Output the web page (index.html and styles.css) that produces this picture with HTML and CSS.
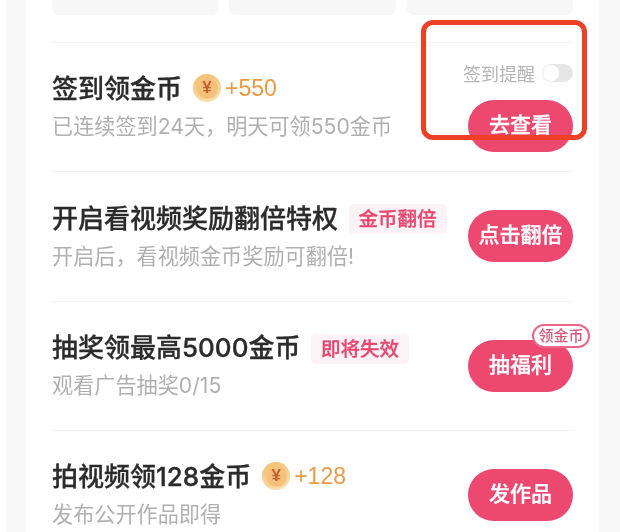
FILE: index.html
```html
<!DOCTYPE html>
<html lang="zh-CN">

<head>
	<meta charset="utf-8">
	<title>金币任务</title>
	<link rel="stylesheet" href="styles.css">
</head>

<body>
	<div class="panel">
		<div class="card">
			<div class="top-tiles">
				<div class="tile"></div>
				<div class="tile"></div>
				<div class="tile"></div>
			</div>

			<div class="task task-first">
				<div class="task-text">
					<div class="task-title">
						<span>签到领金币</span>
						<span class="coin"><span class="coin-inner">¥</span></span>
						<span class="coin-num">+550</span>
					</div>
					<div class="task-sub">已连续签到24天，明天可领550金币</div>
				</div>
				<div class="task-side">
					<div class="remind">
						<span>签到提醒</span>
						<span class="switch"><span class="knob"></span></span>
					</div>
					<div class="btn">去查看</div>
				</div>
			</div>

			<div class="task">
				<div class="task-text">
					<div class="task-title">
						<span>开启看视频奖励翻倍特权</span>
						<span class="tag">金币翻倍</span>
					</div>
					<div class="task-sub">开启后，看视频金币奖励可翻倍!</div>
				</div>
				<div class="task-side">
					<div class="btn">点击翻倍</div>
				</div>
			</div>

			<div class="task">
				<div class="task-text">
					<div class="task-title">
						<span>抽奖领最高5000金币</span>
						<span class="tag">即将失效</span>
					</div>
					<div class="task-sub">观看广告抽奖0/15</div>
				</div>
				<div class="task-side">
					<div class="btn">抽福利<span class="badge">领金币</span></div>
				</div>
			</div>

			<div class="task task-last">
				<div class="task-text">
					<div class="task-title">
						<span>拍视频领128金币</span>
						<span class="coin"><span class="coin-inner">¥</span></span>
						<span class="coin-num">+128</span>
					</div>
					<div class="task-sub">发布公开作品即得</div>
				</div>
				<div class="task-side">
					<div class="btn">发作品</div>
				</div>
			</div>
		</div>
	</div>

	<!-- red annotation box drawn over the screenshot -->
	<div class="mark"></div>
</body>

</html>
```
FILE: styles.css
```css
html, body {
	margin: 0;
	padding: 0;
}

body {
	position: relative;
	width: 620px;
	height: 532px;
	overflow: hidden;
	background: #fff;
	font-family: Inter, "Noto Sans CJK SC", sans-serif;
}

.panel {
	height: 532px;
	margin-left: 6px;
	padding: 0 21px 0 20px;
	background: #f8f8f8;
}

/* the reference is a soft, upscaled capture */
.card {
	height: 532px;
	padding: 0 26px;
	overflow: hidden;
	background: #fff;
	filter: blur(0.35px);
}

/* Tiles cut off by the top edge */
.top-tiles {
	display: grid;
	grid-template-columns: repeat(3, 1fr);
	gap: 11px;
	height: 15px;
	margin-bottom: 27px;
}

.tile {
	background: #f7f7f7;
	border-radius: 0 0 7px 7px;
}

.task {
	display: flex;
	justify-content: space-between;
	height: 129.4px;
	box-sizing: border-box;
	border-top: 1px solid #f3f3f3;
}

.task-last {
	height: 102px;
}

.task-text {
	padding-top: 26px;
}

.task-first .task-text,
.task-last .task-text {
	padding-top: 25px;
}

.task-title {
	display: flex;
	align-items: center;
	height: 36px;
	font-size: 26px;
	font-weight: 500;
	-webkit-text-stroke: 0.3px #2b2b2b;
	color: #2b2b2b;
}

.task-sub {
	margin-top: 7.5px;
	font-size: 21.15px;
	line-height: 30px;
	color: #b0b0b0;
}

.coin {
	display: flex;
	align-items: center;
	justify-content: center;
	width: 28px;
	height: 28px;
	margin: 4px 0 0 11px;
	border-radius: 50%;
	background: linear-gradient(160deg, #f3bd6d, #f8d9a0 75%, #fbe6c0);
}

.coin-inner {
	display: flex;
	align-items: center;
	justify-content: center;
	width: 21px;
	height: 21px;
	border-radius: 50%;
	background: #f5c07a;
	color: #c2612f;
	-webkit-text-stroke: 0;
	font-family: "Liberation Sans", sans-serif;
	font-size: 17px;
	font-weight: 700;
}

.coin-num {
	margin: 4px 0 0 4px;
	font-family: "Liberation Sans", sans-serif;
	font-size: 23px;
	font-weight: 400;
	-webkit-text-stroke: 0;
	color: #ea9a40;
}

.tag {
	margin: 6px 0 0 10.5px;
	padding: 0 10px;
	height: 30px;
	line-height: 30px;
	border-radius: 5px;
	background: #fdf2f5;
	color: #e8476f;
	-webkit-text-stroke: 0.3px #e8476f;
	font-size: 19.5px;
	font-weight: 500;
}

.task-side {
	display: flex;
	flex-direction: column;
	align-items: flex-end;
	padding-top: 38px;
}

.task-first .task-side {
	padding-top: 20px;
}

.remind {
	display: flex;
	align-items: center;
	gap: 7px;
	height: 20px;
	margin-bottom: 17px;
	font-size: 18px;
	color: #b5b5b5;
}

.switch {
	width: 31px;
	height: 18px;
	border-radius: 9px;
	background: #e6e6e6;
}

.knob {
	display: block;
	width: 16px;
	height: 16px;
	margin: 1px;
	border-radius: 50%;
	background: #fff;
}

.btn {
	position: relative;
	width: 105px;
	height: 52px;
	line-height: 50px;
	border-radius: 26px;
	background: #ec4870;
	color: #fff;
	-webkit-text-stroke: 0.3px #fff;
	text-align: center;
	font-size: 21px;
	font-weight: 500;
}

.badge {
	position: absolute;
	top: -16px;
	right: -17px;
	width: 54px;
	height: 20px;
	line-height: 20px;
	border: 2px solid #e8668a;
	border-radius: 12px;
	background: #fff;
	color: #d9587a;
	-webkit-text-stroke: 0;
	font-size: 15px;
	font-weight: 500;
}

.mark {
	position: absolute;
	left: 421px;
	top: 20px;
	width: 156px;
	height: 110px;
	border: 5px solid #ee4026;
	border-radius: 12px;
}
```
